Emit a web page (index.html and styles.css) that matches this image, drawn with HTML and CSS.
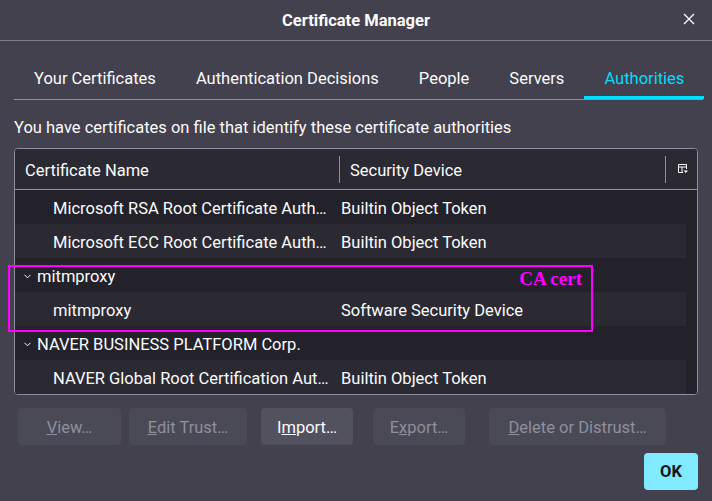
FILE: index.html
```html
<!DOCTYPE html>
<html>
<head>
<meta charset="utf-8">
<link rel="stylesheet" href="styles.css">
</head>
<body>
<div class="dialog">
  <header class="titlebar">
    <span class="title">Certificate Manager</span>
    <svg class="close" width="12" height="12" viewBox="0 0 12 12"><path d="M1 1L11 11M11 1L1 11" stroke="#fbfbfe" stroke-width="1.4"/></svg>
  </header>
  <nav class="tabs">
    <span class="tab">Your Certificates</span>
    <span class="tab">Authentication Decisions</span>
    <span class="tab">People</span>
    <span class="tab">Servers</span>
    <span class="tab active">Authorities</span>
  </nav>
  <p class="desc">You have certificates on file that identify these certificate authorities</p>
  <div class="tree">
    <div class="thead">
      <div class="th th-name">Certificate Name</div>
      <div class="th th-dev">Security Device</div>
      <div class="th th-pick">
        <svg width="10" height="10" viewBox="0 0 10 10"><path d="M0.5 0.5H8.5V5M0.5 0.5V8.5H5M0.5 3H8.5M4 3V8.5" stroke="#fbfbfe" stroke-width="1" fill="none"/><path d="M5.5 6.5H10L7.75 9Z" fill="#fbfbfe"/></svg>
      </div>
    </div>
    <div class="tbody">
      <div class="row"><span class="c1 child">Microsoft RSA Root Certificate Auth…</span><span class="c2">Builtin Object Token</span></div>
      <div class="row alt"><span class="c1 child">Microsoft ECC Root Certificate Auth…</span><span class="c2">Builtin Object Token</span></div>
      <div class="row"><span class="c1 group"><svg class="chev" width="7" height="5" viewBox="0 0 7 5"><path d="M0.5 0.8L3.5 3.8L6.5 0.8" stroke="#fbfbfe" stroke-width="1" fill="none"/></svg>mitmproxy</span><span class="c2"></span></div>
      <div class="row alt"><span class="c1 child">mitmproxy</span><span class="c2">Software Security Device</span></div>
      <div class="row"><span class="c1 group"><svg class="chev" width="7" height="5" viewBox="0 0 7 5"><path d="M0.5 0.8L3.5 3.8L6.5 0.8" stroke="#fbfbfe" stroke-width="1" fill="none"/></svg>NAVER BUSINESS PLATFORM Corp.</span><span class="c2"></span></div>
      <div class="row alt"><span class="c1 child">NAVER Global Root Certification Aut…</span><span class="c2">Builtin Object Token</span></div>
    </div>
  </div>
  <div class="actions">
    <button class="btn b-view" disabled><u>V</u>iew…</button>
    <button class="btn b-edit" disabled><u>E</u>dit Trust…</button>
    <button class="btn b-import">I<u>m</u>port…</button>
    <button class="btn b-export" disabled>E<u>x</u>port…</button>
    <button class="btn b-del" disabled><u>D</u>elete or Distrust…</button>
  </div>
  <div class="footer">
    <button class="ok">OK</button>
  </div>
  <div class="annot"><span class="annot-label">CA cert</span></div>
</div>
</body>
</html>
```

FILE: styles.css
```css
* { box-sizing: border-box; }
html, body { margin: 0; padding: 0; }
body {
  background: #42414d;
  color: #fbfbfe;
  font-family: Roboto, "Noto Sans", sans-serif;
  font-size: 16.5px;
  width: 712px;
  height: 501px;
  overflow: hidden;
}
.dialog { position: relative; width: 712px; height: 501px; }
.titlebar {
  height: 41px;
  border-bottom: 1px solid #7d7c87;
  display: flex;
  align-items: center;
  justify-content: center;
  position: relative;
}
.title { font-weight: bold; font-size: 16.5px; }
.close { position: absolute; right: 17px; top: 13px; }
.tabs {
  display: flex;
  margin: 16px 9px 0 14px;
  border-bottom: 1px solid #8f8f9d;
  height: 43px;
}
.tab {
  padding: 1px 20px 0;
  line-height: 41px;
  color: #fbfbfe;
  white-space: nowrap;
}
.tab.active {
  color: #00ddff;
  border-bottom: 3px solid #00ddff;
}
.desc { margin: 18px 0 0 14px; line-height: 20px; }
.tree {
  margin: 10px 14px 0 14px;
  border: 1px solid #8f8f9d;
  border-radius: 4px;
  overflow: hidden;
  background: #1c1b22;
}
.thead {
  display: grid;
  grid-template-columns: 324px 326px 1fr;
  height: 41px;
  background: #2b2a33;
  border-bottom: 1px solid #8f8f9d;
  align-items: center;
}
.th { padding-left: 10px; height: 27px; line-height: 29px; }
.th-dev, .th-pick { border-left: 1px solid #8f8f9d; }
.th-pick { display: flex; align-items: center; justify-content: center; padding-left: 3px; }
.tbody { background: #23222b; padding-right: 11px; }
.row {
  display: grid;
  grid-template-columns: 326px 1fr;
  height: 34px;
  align-items: center;
  padding-top: 2px;
}
.row.alt { background: #2b2a33; }
.c1 { white-space: nowrap; overflow: hidden; }
.c2 { white-space: nowrap; }
.child { padding-left: 38px; }
.group { padding-left: 9px; display: flex; align-items: center; }
.chev { margin-right: 6px; margin-top: 1px; }
.actions {
  display: flex;
  margin: 13px 0 0 18px;
  height: 37px;
}
.btn {
  font: inherit;
  font-size: 16.5px;
  height: 37px;
  border: none;
  border-radius: 4px;
  background: #52515e;
  color: #fbfbfe;
  padding: 1px 0 0;
}
.btn[disabled] { background: #4a4956; color: #8f8f9d; }
.b-view { width: 103px; }
.b-edit { width: 118px; margin-left: 8px; }
.b-import { width: 92px; margin-left: 14px; }
.b-export { width: 92px; margin-left: 20px; }
.b-del { width: 177px; margin-left: 24px; }
.footer { display: flex; justify-content: flex-end; margin: 8px 14px 0 0; }
.ok {
  font: inherit;
  font-weight: bold;
  font-size: 16.5px;
  width: 54px;
  height: 37px;
  border: none;
  border-radius: 4px;
  background: #80ebff;
  color: #15141a;
}
.annot {
  position: absolute;
  left: 8px;
  top: 265px;
  width: 585px;
  height: 67px;
  border: 2px solid #ff00ff;
}
.annot-label {
  position: absolute;
  right: 9px;
  top: 1px;
  font-family: "Liberation Serif", serif;
  font-weight: bold;
  font-size: 19px;
  color: #ff00ff;
}
```
